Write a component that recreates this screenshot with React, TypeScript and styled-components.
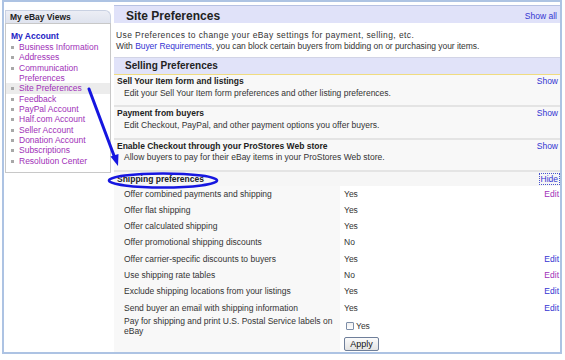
import React from "react";
import styled, { createGlobalStyle } from "styled-components";

const Global = createGlobalStyle`
  html, body { margin: 0; padding: 0; background: #fff; }
  body {
    font-family: "Liberation Sans", Arial, sans-serif;
    font-size: 8.5px;
    color: #333;
  }
  * { box-sizing: border-box; }
`;

const BLUE = "#3434d2";
const PURPLE = "#a030b8";

const Page = styled.div`
  position: relative;
  width: 565px;
  height: 360px;
`;

const Frame = styled.div`
  margin-left: 2px;
  width: 560px;
  height: 354px;
  border: 2px solid #adc3e3;
  display: flex;
  align-items: flex-start;
`;

/* ---------- Sidebar ---------- */
const Sidebar = styled.div`
  margin: 8px 0 0 1px;
  width: 106px;
  flex: none;
`;

const SideHead = styled.div`
  height: 13px;
  line-height: 13px;
  padding-left: 4px;
  font-weight: bold;
  color: #222;
  background: linear-gradient(#eceef5, #dfe3ee);
  border: 1px solid #c9d1e2;
  border-bottom: none;
  border-top-right-radius: 6px;
`;

const SideBody = styled.div`
  border: 1px solid #c8c8c8;
  padding: 6px 0 6px 0;
`;

const AccountTitle = styled.div`
  line-height: 12px;
  padding-left: 5px;
  font-weight: bold;
  color: #2222c4;
`;

const NavList = styled.ul`
  list-style: none;
  margin: 0;
  padding: 0;
`;

const NavItem = styled.li<{ $active?: boolean }>`
  display: flex;
  align-items: flex-start;
  padding-left: 5px;
  line-height: 10.35px;
  color: ${PURPLE};
  background: ${(p) => (p.$active ? "#ececec" : "transparent")};
`;

const Bullet = styled.span`
  flex: none;
  width: 3px;
  height: 3px;
  margin: 4px 5px 0 0;
  background: #a8a8a8;
`;

/* ---------- Main ---------- */
const Main = styled.div`
  flex: 1;
  margin: 3px 0 0 3px;
  min-width: 0;
`;

const TitleBar = styled.div`
  height: 18px;
  border-top: 1px solid #b7c1e2;
  background: #e0e2f9;
  display: flex;
  justify-content: space-between;
  align-items: flex-start;
  padding: 4px 3px 0 12px;
  line-height: 13px;
`;

const PageTitle = styled.div`
  font-size: 12px;
  font-weight: bold;
  color: #222;
`;

const Link = styled.span<{ $visited?: boolean }>`
  color: ${(p) => (p.$visited ? PURPLE : BLUE)};
  cursor: pointer;
`;

const Intro = styled.div`
  padding: 6.5px 0 0 2px;
  line-height: 11.5px;
  color: #333;
  height: 34px;
`;

const IntroLine = styled.div<{ $spread?: number }>`
  letter-spacing: ${(p) => p.$spread ?? 0}px;
`;

const SectionBar = styled.div`
  height: 18px;
  border-top: 1px solid #d2d4e6;
  border-bottom: 1px solid #f0dc80;
  background: #e1e3f9;
  padding-left: 11px;
  line-height: 16px;
  font-size: 10px;
  font-weight: bold;
  color: #222;
`;

const PrefRow = styled.div`
  background: #f8f8f8;
  border-bottom: 2px solid #e4e4e4;
  padding: 1px 2px 0 3px;
  height: 32.3px;
`;

const RowHead = styled.div`
  display: flex;
  justify-content: space-between;
  line-height: 11.5px;
`;

const RowTitle = styled.div`
  font-weight: bold;
  color: #222;
`;

const RowDesc = styled.div`
  padding-left: 7px;
  line-height: 11.5px;
  color: #333;
`;

const ShipHead = styled.div`
  height: 14px;
  background: #f6f6f6;
  display: flex;
  justify-content: space-between;
  align-items: center;
  padding: 0 0 0 3px;
`;

const HideBox = styled.span`
  border: 1px dotted #4a55cc;
  padding: 0 1px;
  line-height: 10px;
  color: ${BLUE};
  margin-top: 1px;
`;

const ShipGrid = styled.div`
  display: grid;
  grid-template-columns: 226px 1fr auto;
`;

const Cell = styled.div<{ $label?: boolean; $tall?: boolean }>`
  height: ${(p) => (p.$tall ? "36px" : "16.3px")};
  display: flex;
  flex-direction: column;
  justify-content: ${(p) => (p.$tall ? "flex-start" : "center")};
  background: ${(p) => (p.$label ? "#f8f8f8" : "#fff")};
  padding-left: ${(p) => (p.$label ? "10px" : "4px")};
  padding-right: ${(p) => (p.$label ? "4px" : "1px")};
  line-height: ${(p) => (p.$tall ? "10px" : "11px")};
  color: #333;
`;

const CheckLine = styled.label`
  display: flex;
  align-items: center;
  margin-top: 3px;
  height: 14px;
  gap: 2px;
  color: #333;
`;

const Check = styled.input`
  appearance: none;
  margin: 0 0 0 2px;
  width: 8px;
  height: 8px;
  border: 1px solid #7d8ea8;
  border-radius: 1px;
  background: linear-gradient(#f0f0f0, #ffffff);
`;

const ApplyButton = styled.button`
  margin-top: 4px;
  width: 35px;
  height: 14px;
  padding: 0;
  border: 1px solid #6f7f9a;
  border-radius: 2px;
  background: linear-gradient(#fbfbfb, #e3e3e3);
  font-family: inherit;
  font-size: 9px;
  color: #111;
  line-height: 12px;
`;

const Overlay = styled.svg`
  position: absolute;
  left: 0;
  top: 0;
  pointer-events: none;
`;

const navItems: { label: React.ReactNode; active?: boolean }[] = [
  { label: "Business Information" },
  { label: "Addresses" },
  { label: <>Communication<br />Preferences</> },
  { label: "Site Preferences", active: true },
  { label: "Feedback" },
  { label: "PayPal Account" },
  { label: "Half.com Account" },
  { label: "Seller Account" },
  { label: "Donation Account" },
  { label: "Subscriptions" },
  { label: "Resolution Center" },
];

const sellingRows = [
  {
    title: "Sell Your Item form and listings",
    desc: "Edit your Sell Your Item form preferences and other listing preferences.",
  },
  {
    title: "Payment from buyers",
    desc: "Edit Checkout, PayPal, and other payment options you offer buyers.",
  },
  {
    title: "Enable Checkout through your ProStores Web store",
    desc: "Allow buyers to pay for their eBay items in your ProStores Web store.",
  },
];

type Edit = "none" | "blue" | "visited";
const shipRows: { label: string; value: string; edit: Edit }[] = [
  { label: "Offer combined payments and shipping", value: "Yes", edit: "visited" },
  { label: "Offer flat shipping", value: "Yes", edit: "none" },
  { label: "Offer calculated shipping", value: "Yes", edit: "none" },
  { label: "Offer promotional shipping discounts", value: "No", edit: "none" },
  { label: "Offer carrier-specific discounts to buyers", value: "Yes", edit: "blue" },
  { label: "Use shipping rate tables", value: "No", edit: "visited" },
  { label: "Exclude shipping locations from your listings", value: "Yes", edit: "blue" },
  { label: "Send buyer an email with shipping information", value: "Yes", edit: "blue" },
];

export default function App() {
  return (
    <Page>
      <Global />
      <Frame>
        <Sidebar>
          <SideHead>My eBay Views</SideHead>
          <SideBody>
            <AccountTitle>My Account</AccountTitle>
            <NavList>
              {navItems.map((n, i) => (
                <NavItem key={i} $active={n.active}>
                  <Bullet />
                  <span>{n.label}</span>
                </NavItem>
              ))}
            </NavList>
          </SideBody>
        </Sidebar>

        <Main>
          <TitleBar>
            <PageTitle>Site Preferences</PageTitle>
            <Link>Show all</Link>
          </TitleBar>
          <Intro>
            <IntroLine $spread={0.4}>
              Use Preferences to change your eBay settings for payment, selling, etc.
            </IntroLine>
            <IntroLine $spread={-0.05}>
              With <Link>Buyer Requirements</Link>, you can block certain buyers from bidding on or purchasing your items.
            </IntroLine>
          </Intro>
          <SectionBar>Selling Preferences</SectionBar>
          {sellingRows.map((r) => (
            <PrefRow key={r.title}>
              <RowHead>
                <RowTitle>{r.title}</RowTitle>
                <Link>Show</Link>
              </RowHead>
              <RowDesc>{r.desc}</RowDesc>
            </PrefRow>
          ))}
          <ShipHead>
            <RowTitle>Shipping preferences</RowTitle>
            <HideBox>Hide</HideBox>
          </ShipHead>
          <ShipGrid>
            {shipRows.map((r) => (
              <React.Fragment key={r.label}>
                <Cell $label>{r.label}</Cell>
                <Cell>{r.value}</Cell>
                <Cell>
                  {r.edit !== "none" && <Link $visited={r.edit === "visited"}>Edit</Link>}
                </Cell>
              </React.Fragment>
            ))}
            <Cell $label $tall>
              Pay for shipping and print U.S. Postal Service labels on eBay
            </Cell>
            <Cell $tall>
              <CheckLine>
                <Check type="checkbox" />
                Yes
              </CheckLine>
              <div>
                <ApplyButton type="button">Apply</ApplyButton>
              </div>
            </Cell>
            <Cell $tall />
          </ShipGrid>
        </Main>
      </Frame>

      <Overlay width={565} height={360} viewBox="0 0 565 360">
        <line x1={89} y1={89} x2={114.5} y2={157} stroke="#1616e0" strokeWidth={3} strokeLinecap="round" />
        <polygon points="118,166 110.5,156.5 118.5,154" fill="#1616e0" />
        <ellipse cx={163} cy={180.5} rx={54} ry={7} fill="none" stroke="#1616e0" strokeWidth={2.6} />
      </Overlay>
    </Page>
  );
}
